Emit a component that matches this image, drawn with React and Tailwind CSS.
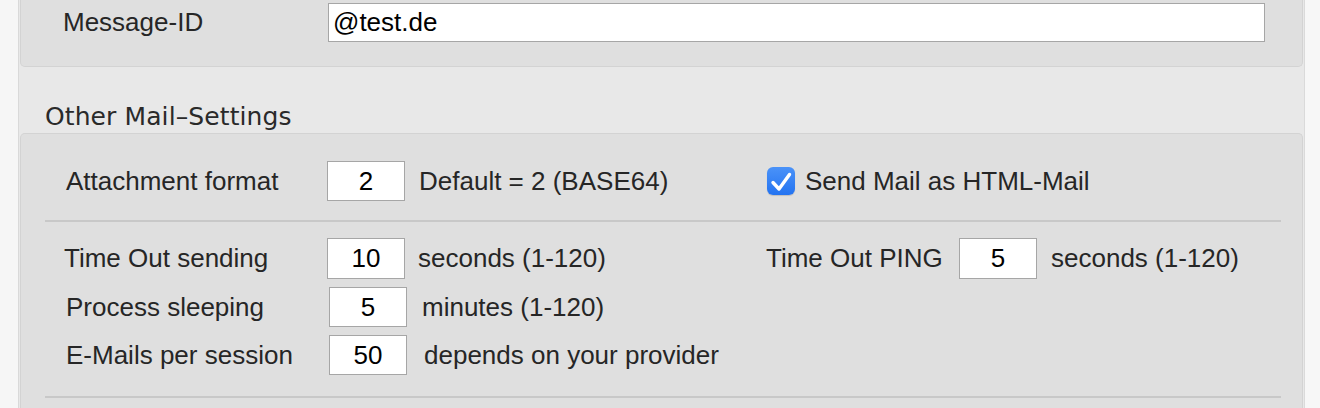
import React from "react";

const Field = ({ value, className = "" }) => (
  <input
    readOnly
    value={value}
    className={`h-[40px] w-[78px] border border-[#a6a6a6] bg-white text-center text-[26px] text-black outline-none ${className}`}
  />
);

const Checkbox = () => (
  <div className="flex h-[28px] w-[28px] items-center justify-center rounded-[6px] bg-gradient-to-b from-[#4a92f8] to-[#2373f1] shadow-[0_1px_1px_rgba(0,0,0,0.15)]">
    <svg width="28" height="28" viewBox="0 0 28 28" fill="none">
      <path
        d="M6 15.5 L12 22 L22.5 7.5"
        stroke="white"
        strokeWidth="3.4"
        strokeLinecap="round"
        strokeLinejoin="round"
      />
    </svg>
  </div>
);

const App = () => {
  return (
    <div className="flex h-[408px] w-[1320px] overflow-hidden font-['Liberation_Sans',Arial,sans-serif] text-[26px] text-[#262626]">
      <div className="w-[19px] shrink-0 border-r border-[#d9d9d9] bg-[#f6f6f6]" />

      <div className="flex flex-1 flex-col bg-[#e8e8e8] px-[1px]">
        {/* Message-ID box */}
        <div className="flex h-[67px] shrink-0 items-start rounded-b-[5px] border-x border-b border-[#d3d3d3] bg-[#dfdfdf] pt-[3px] pl-[42px]">
          <div className="flex h-[39px] w-[265px] items-center">Message-ID</div>
          <input
            readOnly
            value="@test.de"
            className="h-[39px] w-[937px] border border-[#a6a6a6] bg-white px-[4px] text-[26px] text-black outline-none"
          />
        </div>

        {/* Section title */}
        <div className="h-[66px] shrink-0 pt-[34px] pl-[25px] font-['DejaVu_Sans',Verdana,sans-serif] text-[25px] leading-[32px] tracking-[0.1px] text-[#2a2a2a]">
          Other Mail–Settings
        </div>

        {/* Other settings box */}
        <div className="flex-1 rounded-t-[5px] border-x border-t border-[#d3d3d3] bg-[#dfdfdf] pt-[27px]">
          <div className="flex h-[40px] items-center pl-[45px]">
            <div className="w-[261px]">Attachment format</div>
            <Field value="2" />
            <div className="ml-[14px] w-[348px]">Default = 2 (BASE64)</div>
            <Checkbox />
            <div className="ml-[10px]">Send Mail as HTML-Mail</div>
          </div>

          <div className="mt-[19px] mr-[21px] ml-[24px] h-[2px] bg-[#c8c8c8]" />

          <div className="mt-[16px] flex h-[41px] items-center pl-[43px]">
            <div className="w-[263px]">Time Out sending</div>
            <Field value="10" className="h-[41px]" />
            <div className="ml-[13px] w-[348px]">seconds (1-120)</div>
            <div className="w-[193px]">Time Out PING</div>
            <Field value="5" className="h-[41px] w-[77px]" />
            <div className="ml-[14px]">seconds (1-120)</div>
          </div>

          <div className="mt-[8px] flex h-[40px] items-center pl-[45px]">
            <div className="w-[263px]">Process sleeping</div>
            <Field value="5" />
            <div className="ml-[15px]">minutes (1-120)</div>
          </div>

          <div className="mt-[8px] flex h-[40px] items-center pl-[45px]">
            <div className="w-[263px]">E-Mails per session</div>
            <Field value="50" />
            <div className="ml-[17px]">depends on your provider</div>
          </div>

          <div className="mt-[21px] mr-[21px] ml-[24px] h-[2px] bg-[#c8c8c8]" />
        </div>
      </div>

      <div className="w-[16px] shrink-0 border-l border-[#dadada] bg-[#f7f7f7]" />
    </div>
  );
};

export default App;
